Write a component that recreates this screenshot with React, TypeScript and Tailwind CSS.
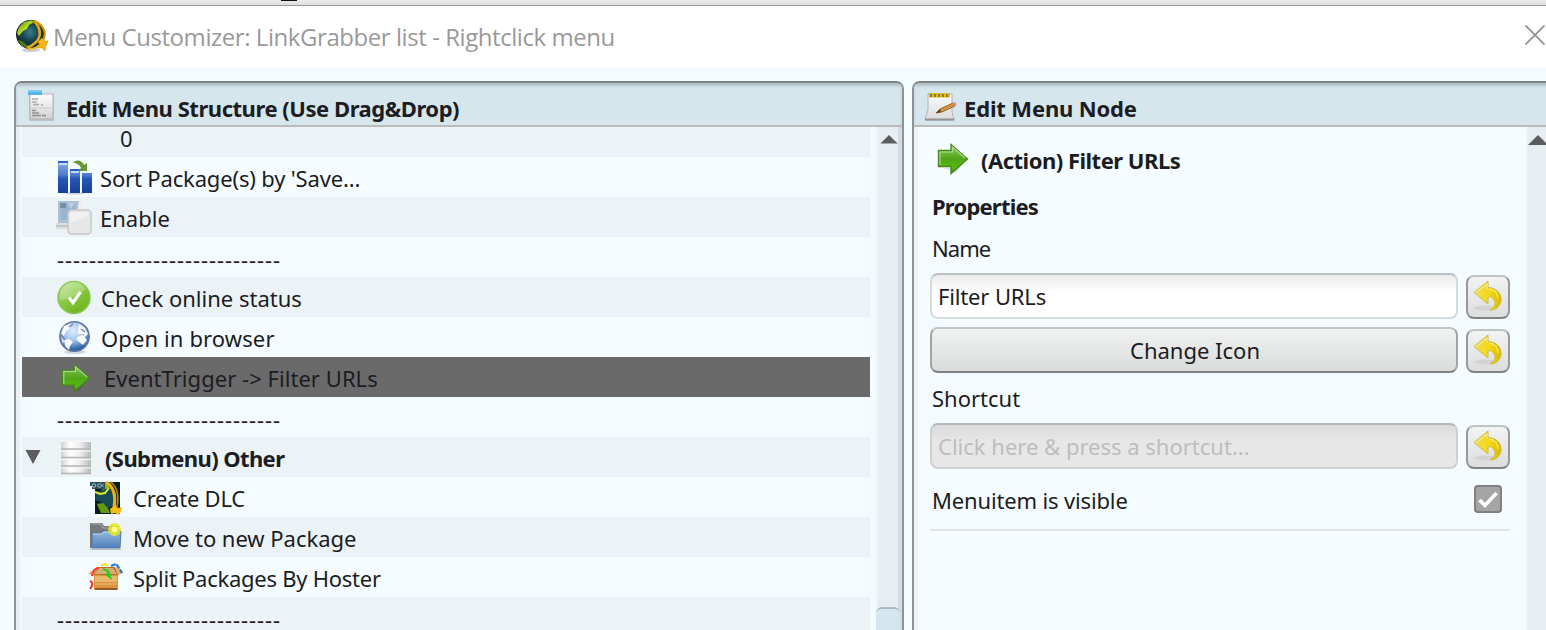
import React from "react";

function Globe({ className = "" }: { className?: string }) {
  return (
    <svg viewBox="0 0 32 32" className={className}>
      <defs>
        <radialGradient id="gl" cx="48%" cy="42%" r="60%">
          <stop offset="0" stopColor="#3b7f88" />
          <stop offset=".5" stopColor="#17434d" />
          <stop offset="1" stopColor="#0a1a1c" />
        </radialGradient>
        <linearGradient id="gla" x2="1" y2="1">
          <stop stopColor="#4c7510" />
          <stop offset=".5" stopColor="#b9dc1d" />
          <stop offset="1" stopColor="#4b7a0e" />
        </linearGradient>
      </defs>
      <ellipse cx="15" cy="30" rx="9" ry="2" fill="#0003" />
      <circle cx="14.500" cy="14.500" r="14.500" fill="url(#gl)" />
      <path d="M1 13 3 7 8 2 15 .5 18 2 13 5 11 9 7 11 3 16Z" fill="url(#gla)" />
      <path d="M2 20 6 21 11 25 15 28 10 28 5 25Z" fill="#4c790f" />
      <path d="M18 1C26 9 25 18 19 23 16 26 13 27 11 27.500" fill="none" stroke="#e3a616" strokeWidth="2.600" />
      <path d="M18 1C28 5 31 13 27 20" fill="none" stroke="#d0930e" strokeWidth="2.200" />
      <path d="M12 28.500C19 30 23 26 26 22" fill="none" stroke="#f0b41c" strokeWidth="2" />
      <path d="M22 22 26 18 29 21 32 21 30 26 29 31 26 28 21 28 24 25Z" fill="#f5b518" stroke="#c78a0c" strokeWidth=".5" />
    </svg>
  );
}

function DlcIcon() {
  return (
    <svg viewBox="0 0 34 36" className="mt-px h-9 w-[34px] shrink-0">
      <path d="M6 2H31V34H6Z" fill="#0a1c1c" />
      <path d="M7 12 22 7 27 14 26 24 20 28 12 22 6 20Z" fill="#174c56" />
      <path d="M6 10H13L20 8 22 3 16 2 13 10Z" fill="#8fbb12" />
      <path d="M6 12 11 14 16 13 20 8" fill="none" stroke="#dcef22" strokeWidth="2" />
      <path d="M8 24 14 23 19 28 21 33 12 33Z" fill="#649c10" />
      <path d="M17 2c8 5 10 14 8 25" fill="none" stroke="#edb01a" strokeWidth="3.200" />
      <path d="M22 2c7 6 8 15 6 25" fill="none" stroke="#b98a18" strokeWidth="1.600" />
      <path d="M21 29 26 25 29 28 33 27 32 31 30 35 26 33 22 34Z" fill="#f7bc16" />
      <path d="M1 2H16V9H3V6H1Z" fill="#2b4f5b" />
      <circle cx="5" cy="5.500" r="1.800" fill="none" stroke="#a6c1cb" />
      <circle cx="10.500" cy="5.500" r="1.800" fill="none" stroke="#a6c1cb" />
      <path d="M14.500 4 13 5.500 14.500 7" fill="none" stroke="#a6c1cb" />
    </svg>
  );
}

function DocIcon() {
  return (
    <svg viewBox="0 0 28 32" className="mt-[4px] h-8 w-7 shrink-0">
      <defs>
        <linearGradient id="doc" x2="0" y2="1"><stop stopColor="#fff" /><stop offset="1" stopColor="#d0d0d0" /></linearGradient>
      </defs>
      <rect x="1" y="4" width="25" height="27" fill="#aaa" opacity=".6" />
      <rect x="2" y="4" width="23" height="25" fill="url(#doc)" stroke="#b4b4b4" />
      <path d="M0 0H14V5H0Z" fill="#57b5e6" /><path d="M0 0H14V2H0Z" fill="#7ccaf0" />
      <path d="M4 9h6M4 12h5M5 14.500h6M13 15h2" stroke="#aaa" strokeWidth="1.300" />
      <path d="M4 20.500h4M4 23h7M4 25.500h9M14 25.500h4" stroke="#909090" strokeWidth="1.400" />
      <path d="M2 18H25" stroke="#ccc" />
    </svg>
  );
}

function NoteIcon() {
  return (
    <svg viewBox="0 0 34 30" className="mt-[5px] h-[30px] w-[34px] shrink-0">
      <defs>
        <linearGradient id="note" x2="0" y2="1"><stop stopColor="#fafafa" /><stop offset="1" stopColor="#dcdcdc" /></linearGradient>
      </defs>
      <path d="M4 2H28V20L30 27V28H1V27L4 18Z" fill="url(#note)" stroke="#b4b4b4" />
      <path d="M1 26.500H30V28.500H1Z" fill="#949494" />
      <path d="M5 1H26V5.500H5Z" fill="#d9bd27" />
      <path d="M7 2v3M11 2v3M15 2v3M19 2v3M23 2v3" stroke="#786310" strokeWidth="1.400" />
      <path d="M12 21 16 17 29 11 31 14 18 20Z" fill="#d8953d" stroke="#7e5225" strokeWidth=".8" />
      <path d="M28.500 11.500 31 10 32.500 12.500 30.500 14Z" fill="#dc8175" />
      <path d="M12 21 16 17 17 20Z" fill="#5a4124" />
    </svg>
  );
}

function ArrowIcon({ className = "" }: { className?: string }) {
  return (
    <svg viewBox="0 0 32 32" className={className}>
      <defs>
        <linearGradient id="arr" x2="0" y2="1"><stop stopColor="#8fcd68" /><stop offset=".5" stopColor="#50a518" /><stop offset=".8" stopColor="#55bb0e" /><stop offset="1" stopColor="#398500" /></linearGradient>
      </defs>
      <path d="M4 25H15V30L27 19 20 29 14 31 12 26Z" fill="#0002" />
      <path d="M1.500 7.500H14V1.500L30.500 16 14 30.500V23.500H1.500Z" fill="url(#arr)" stroke="#45851c" strokeWidth="1.300" />
      <path d="M3 22V9H15.500V4L28 15" fill="none" stroke="#a9da8d" strokeWidth="1.200" />
    </svg>
  );
}

function SortIcon() {
  return (
    <svg viewBox="0 0 35 36" className="h-9 w-[35px] shrink-0">
      <defs>
        <linearGradient id="bar" x2="0" y2="1"><stop stopColor="#91b0e4" /><stop offset=".45" stopColor="#4a78ca" /><stop offset=".55" stopColor="#2459b7" /><stop offset="1" stopColor="#183f95" /></linearGradient>
      </defs>
      <ellipse cx="18" cy="34.500" rx="10" ry="1.500" fill="#0002" />
      <path d="M1 2H11V34H1ZM13 10H23V34H13ZM25 14H35V34H25Z" fill="url(#bar)" />
      <path d="M1 3H11M13 11H23" stroke="#2862c4" strokeWidth="2" />
      <path d="M2 5H10M14 13H22" stroke="#e5edfa" strokeWidth="1.500" />
      <path d="M16 4C19 0 25 1 27 6L30 4V12H21L24 9C23 6 20 4 16 4Z" fill="#659832" />
    </svg>
  );
}

function EnableIcon() {
  return (
    <svg viewBox="0 0 36 36" className="h-9 w-9 shrink-0">
      <path d="M0 24H19V30H0Z" fill="#dedede" /><path d="M0 27H17" stroke="#b9bdbd" strokeWidth="1.500" />
      <path d="M2 2H23L21 24H2Z" fill="#aac1d8" /><path d="M4 4H20L18 21H5Z" fill="#9ab5cf" />
      <path d="M4 4H10V9H4Z" fill="#748ea5" /><path d="M12 4H19L15 10Z" fill="#bdd0e1" />
      <path d="M23 1H27V12H22Z" fill="#ededed" />
      <rect x="12" y="11" width="23" height="24" rx="3.500" fill="#e7e7e7" stroke="#c7c7c7" strokeWidth="1.500" />
      <path d="M15 13H32V17L14 24V15Z" fill="#f5f5f5" opacity=".7" />
    </svg>
  );
}

function CheckIcon() {
  return (
    <svg viewBox="0 0 36 36" className="mt-[2px] h-9 w-9 shrink-0">
      <defs>
        <linearGradient id="ck" x2=".7" y2="1"><stop stopColor="#bfe394" /><stop offset=".5" stopColor="#8bca43" /><stop offset="1" stopColor="#6db31e" /></linearGradient>
      </defs>
      <circle cx="18" cy="17.500" r="16" fill="url(#ck)" stroke="#8ac653" strokeWidth="1.500" />
      <path d="M4 18A14 14 0 0 1 30 9Q18 18 5 20Z" fill="#fff" opacity=".25" />
      <path d="M13 17.500 17 22.500 24.500 12" fill="none" stroke="#fff" strokeWidth="3.200" />
    </svg>
  );
}

function WorldIcon() {
  return (
    <svg viewBox="0 0 34 36" className="mt-[2px] h-9 w-[34px] shrink-0">
      <defs>
        <radialGradient id="wo" cx="45%" cy="30%" r="65%"><stop stopColor="#dcecff" /><stop offset=".5" stopColor="#a6c8ec" /><stop offset="1" stopColor="#2c62a5" /></radialGradient>
      </defs>
      <ellipse cx="18" cy="32" rx="11" ry="2" fill="#0002" />
      <circle cx="17.500" cy="16.500" r="14.700" fill="url(#wo)" stroke="#6473a1" strokeWidth="1.400" />
      <path d="M7 6 13 4 13 9 9 11 7 16 4 14ZM22 4 28 8 31 14 27 18 27 14 21 14 21 9ZM7 20 12 19 16 22 13 26 12 30 8 26ZM22 16 26 15 30 20 26 25 22 22 19 19ZM4 17 7 21 6 24Z" fill="#f5f8f8" />
      <path d="M12 7 16 4M24 9 28 12M4 14 8 20M27 25 31 21" stroke="#75809d" strokeWidth="1.200" />
    </svg>
  );
}

function StackIcon() {
  return (
    <svg viewBox="0 0 34 36" className="h-9 w-[34px] shrink-0">
      <defs>
        <linearGradient id="st"><stop stopColor="#d1d1d1" /><stop offset=".3" stopColor="#fff" /><stop offset=".65" stopColor="#ececec" /><stop offset="1" stopColor="#b7b7b7" /></linearGradient>
      </defs>
      <path d="M2 2H32V10L31 11 32 12V18L31 19 32 20V26L31 27 32 28V34H2V28L3 27 2 26V20L3 19 2 18V12L3 11 2 10Z" fill="url(#st)" />
      <path d="M2 10H32M2 18.500H32M2 27H32M2 34.500H32" stroke="#b4b4b4" strokeWidth="1.300" />
      <path d="M2 2.500H32M2 12H32M2 20.500H32M2 29H32" stroke="#f8f8f8" />
    </svg>
  );
}

function FolderIcon() {
  return (
    <svg viewBox="0 0 34 32" className="h-8 w-[34px] shrink-0">
      <defs><linearGradient id="fo" x2="0" y2="1"><stop stopColor="#96b8df" /><stop offset="1" stopColor="#4e7fba" /></linearGradient></defs>
      <path d="M1 2H13L15 5H29V27H1Z" fill="#77787a" />
      <path d="M2 3H12L14 7H27" stroke="#aaa" fill="none" />
      <path d="M3 12H12L14 10H32L31 27H3Z" fill="url(#fo)" stroke="#5275a0" />
      <path d="M4 13H13L15 11H30" stroke="#b6cfea" fill="none" />
      <path d="M1 28.500H32" stroke="#bbb" />
      <circle cx="25.500" cy="8.500" r="6.500" fill="#e9e51c" opacity=".85" /><circle cx="25.500" cy="8.500" r="3" fill="#ffff87" />
    </svg>
  );
}

function BoxIcon() {
  return (
    <svg viewBox="0 0 36 32" className="mt-px h-8 w-9 shrink-0">
      <path d="M6 12H30V28H6Z" fill="#d99441" /><path d="M7 14H29V20H7Z" fill="#eab66b" />
      <path d="M7 27H29" stroke="#7f461a" strokeWidth="1.500" /><path d="M7 22H29" stroke="#edbd78" />
      <path d="M5 13 9 5H27L31 13Z" fill="#b86f2c" /><path d="M6 13 0 12 6 7 10 5ZM30 13 35 11 31 7 27 5Z" fill="#e8ae68" />
      <path d="M7 12 10 6H25L29 12Z" fill="#d7ad76" />
      <path d="M2 27C5 24 5 20 2 19M4 14C5 9 7 6 11 6" stroke="#ef3f30" strokeWidth="2.200" fill="none" />
      <path d="M13 4 17 2 20 4" stroke="#ffe31a" strokeWidth="2" fill="none" />
      <path d="M15 7 20 9 22 15 18 12" stroke="#24cc20" strokeWidth="2.200" fill="none" />
      <path d="M23 4 28 2 31 6 34 11" stroke="#2378df" strokeWidth="2.200" strokeDasharray="5 1" fill="none" />
    </svg>
  );
}

function UndoButton() {
  return (
    <button className="flex size-11 shrink-0 justify-center rounded-lg border-2 border-t-[#bfc2c3] border-r-[#969899] border-b-[#808283] border-l-[#969899] bg-linear-to-b from-[#f2f3f3] to-[#dcdddd] pt-[3px]">
      <svg viewBox="0 0 32 32" className="size-8">
        <defs><linearGradient id="un"><stop stopColor="#f4dc62" /><stop offset=".6" stopColor="#f0d90f" /><stop offset="1" stopColor="#d9b800" /></linearGradient></defs>
        <ellipse cx="14" cy="28" rx="12" ry="2.500" fill="#0001" />
        <path d="M2 12.500 16 1V7.500C26 8 30 15 29 21 28 26 24 30 18 30 23 27 24 23 22 20 20 17 18 16 16 17V24Z" fill="url(#un)" stroke="#d1b640" strokeWidth=".9" />
        <path d="M4 12.500 15 4V9M17 9C23 10 26 14 26 19" fill="none" stroke="#f8e98e" strokeWidth="1.100" />
      </svg>
    </button>
  );
}

function Row({ icon, label, cls = "", text = "" }: { icon?: React.ReactNode; label: string; cls?: string; text?: string }) {
  return (
    <div className={"flex h-10 shrink-0 items-center whitespace-pre " + cls}>
      {icon}
      <span className={"mt-[2px] " + text}>{label}</span>
    </div>
  );
}

const dashes = "-".repeat(28);
const odd = "bg-[#ebf3f6]";
const inputFrame = "h-[46px] w-[528px] rounded-lg border-2";

export default function App() {
  return (
    <div className="flex h-[630px] w-[1546px] flex-col overflow-hidden bg-[#f4fcff] font-['Noto_Sans',sans-serif] text-[22px] leading-8 text-[#1c1c22]">
      <div className="h-[6px] shrink-0 border-b border-[#999] bg-linear-to-b from-[#ececec] to-[#dedede]">
        <div className="ml-[281px] h-px w-4 bg-[#111]" />
      </div>
      <header className="flex h-[61px] shrink-0 items-center bg-white pl-4">
        <Globe className="mb-px size-8" />
        <h1 className="ml-[5px] pt-px font-['Open_Sans',sans-serif] text-[24px] tracking-[-0.44px] whitespace-nowrap text-[#999]">Menu Customizer: LinkGrabber list - Rightclick menu</h1>
        <svg viewBox="0 0 20 20" className="mr-px mb-1 ml-auto size-5"><path d="M.5.5 19.500 19.500M19.500.5.5 19.500" stroke="#919191" strokeWidth="1.800" /></svg>
      </header>
      <main className="flex flex-1 pt-[14px] pl-[14px]">
        <section className="flex h-[560px] w-[890px] shrink-0 flex-col overflow-hidden rounded-t-lg border-2 border-b-0 border-[#8e9397] border-t-[#7d8183]">
          <div className="flex h-[44px] shrink-0 items-center border-b-2 border-[#b9bbbd] bg-[#d6e6ed] pl-3 shadow-[inset_0_3px_3px_#afc0ca]">
            <DocIcon />
            <h2 className="ml-[10px] pt-2 font-bold tracking-[-0.46px] whitespace-nowrap">Edit Menu Structure (Use Drag&amp;Drop)</h2>
          </div>
          <div className="flex min-h-0 flex-1 border-l-4 border-[#e9eff2] pl-[2px]">
            <div className="flex w-[848px] flex-col overflow-hidden">
              <div className={"h-[30px] shrink-0 pl-[98px] leading-[22px] " + odd}>0</div>
              <Row cls="pl-[35px]" icon={<SortIcon />} label="Sort Package(s) by 'Save..." text="pl-2 tracking-[-0.16px]" />
              <Row cls={"pl-[34px] " + odd} icon={<EnableIcon />} label="Enable" text="pl-2" />
              <Row cls="pl-[35px]" label={dashes} text="pt-[2px] tracking-[0.92px]" />
              <Row cls={"pl-[34px] " + odd} icon={<CheckIcon />} label="Check online status" text="pl-[9px]" />
              <Row cls="pl-[35px]" icon={<WorldIcon />} label="Open in browser" text="pl-[10px] tracking-[0.12px]" />
              <Row cls="bg-[#6a6a6a] pl-[39px]" icon={<ArrowIcon className="mt-px size-[30px] shrink-0" />} label="EventTrigger -> Filter URLs" text="pl-[13px] tracking-[0.04px]" />
              <Row cls="pl-[35px]" label={dashes} text="pt-[2px] tracking-[0.92px]" />
              <Row
                cls={"pl-[3px] " + odd}
                icon={<><svg viewBox="0 0 16 16" className="mr-[18px] mb-px size-4"><path d="M.5 1H15.500L8 15Z" fill="#5c5c5c" /></svg><StackIcon /></>}
                label="(Submenu) Other"
                text="pl-3 font-bold tracking-[-0.6px]"
              />
              <Row cls="pl-[67px]" icon={<DlcIcon />} label="Create DLC" text="pl-[10px] tracking-[-0.25px]" />
              <Row cls={"pl-[67px] " + odd} icon={<FolderIcon />} label="Move to new Package" text="pl-[10px] tracking-[-0.03px]" />
              <Row cls="pl-[66px]" icon={<BoxIcon />} label="Split Packages By Hoster" text="pl-[9px] tracking-[-0.26px]" />
              <Row cls={"pl-[35px] " + odd} label={dashes} text="pt-[2px] tracking-[0.92px]" />
            </div>
            <div className="ml-[6px] flex w-[26px] flex-col border-r-4 border-l-2 border-r-[#d5dbdf] border-l-[#edf4f7] bg-[#e7eef2] pt-2">
              <svg viewBox="0 0 20 10" className="ml-px h-[10px] w-5"><path d="M0 10H20L10 0Z" fill="#5c5c5c" /></svg>
              <div className="mt-[463px] -mr-0.5 -ml-0.5 h-10 rounded-t-md border-t-2 border-[#afb9bf] bg-[#d5e6ee]" />
            </div>
          </div>
        </section>
        <section className="ml-2 flex h-[560px] w-[640px] shrink-0 flex-col overflow-hidden rounded-tl-lg border-t-2 border-l-2 border-[#8e9397] border-t-[#7d8183]">
          <div className="flex h-[44px] shrink-0 items-center border-b-2 border-[#b9bbbd] bg-[#d6e6ed] pl-[10px] shadow-[inset_0_3px_3px_#afc0ca]">
            <NoteIcon />
            <h2 className="ml-[6px] pt-2 font-bold tracking-[-0.15px] whitespace-nowrap">Edit Menu Node</h2>
          </div>
          <div className="flex min-h-0 flex-1 border-l-4 border-[#edf3f6]">
            <div className="flex w-[592px] shrink-0 flex-col pl-3">
              <div className="mt-[16px] flex h-8 items-center pl-[7px]">
                <ArrowIcon className="size-8" />
                <span className="ml-3 pt-px font-bold tracking-[-0.5px]">(Action) Filter URLs</span>
              </div>
              <h3 className="mt-[15px] ml-[2px] h-8 font-bold tracking-[-0.8px]">Properties</h3>
              <label className="mt-[10px] ml-[2px] h-8 tracking-[-0.95px]">Name</label>
              <div className="mt-[9px] flex gap-2">
                <div className={inputFrame + " border-[#d5dadc] border-t-[#bcc0c2] bg-linear-to-b from-[#ebebeb] via-white via-40% to-white pt-[5px] pl-[6px] tracking-[-0.15px]"}>Filter URLs</div>
                <div className="pt-[2px]"><UndoButton /></div>
              </div>
              <div className="mt-2 flex gap-2">
                <button className={inputFrame + " border-t-[#c2c5c6] border-r-[#a1a3a4] border-b-[#7f8182] border-l-[#a1a3a4] bg-linear-to-b from-[#f1f2f2] to-[#dadbdb] pl-[2px] pb-px"}>Change Icon</button>
                <div className="pt-[2px]"><UndoButton /></div>
              </div>
              <label className="mt-[9px] ml-[2px] h-8">Shortcut</label>
              <div className="mt-[9px] flex gap-2">
                <div className={inputFrame + " border-[#cdd1d3] border-t-[#b5b8ba] bg-linear-to-b from-[#dbdbdb] to-[#e7e7e7] to-40% pt-[5px] pl-[6px] text-[#bdbdbf]"}>Click here &amp; press a shortcut...</div>
                <div className="pt-[2px]"><UndoButton /></div>
              </div>
              <div className="mt-4 flex h-8 pl-[2px]">
                <label className="-mt-px tracking-[-0.15px]">Menuitem is visible</label>
                <svg viewBox="0 0 28 28" className="mr-2 ml-auto size-7">
                  <rect x="1" y="1" width="26" height="26" rx="3" fill="#a5a5a5" stroke="#7e8081" strokeWidth="2" />
                  <path d="M5.500 15 11 20.500 22.500 8" fill="none" stroke="#fff" strokeWidth="3.600" />
                </svg>
              </div>
              <div className="mt-3 h-[3px] w-[580px] border-t-2 border-b border-t-[#e1e7e9] border-b-white" />
            </div>
            <div className="ml-4 w-[26px] shrink-0 border-l-2 border-[#edf4f7] bg-[#e7eef2] pt-2">
              <svg viewBox="0 0 20 10" className="h-[10px] w-5"><path d="M0 10H20L10 0Z" fill="#5c5c5c" /></svg>
            </div>
          </div>
        </section>
      </main>
    </div>
  );
}
